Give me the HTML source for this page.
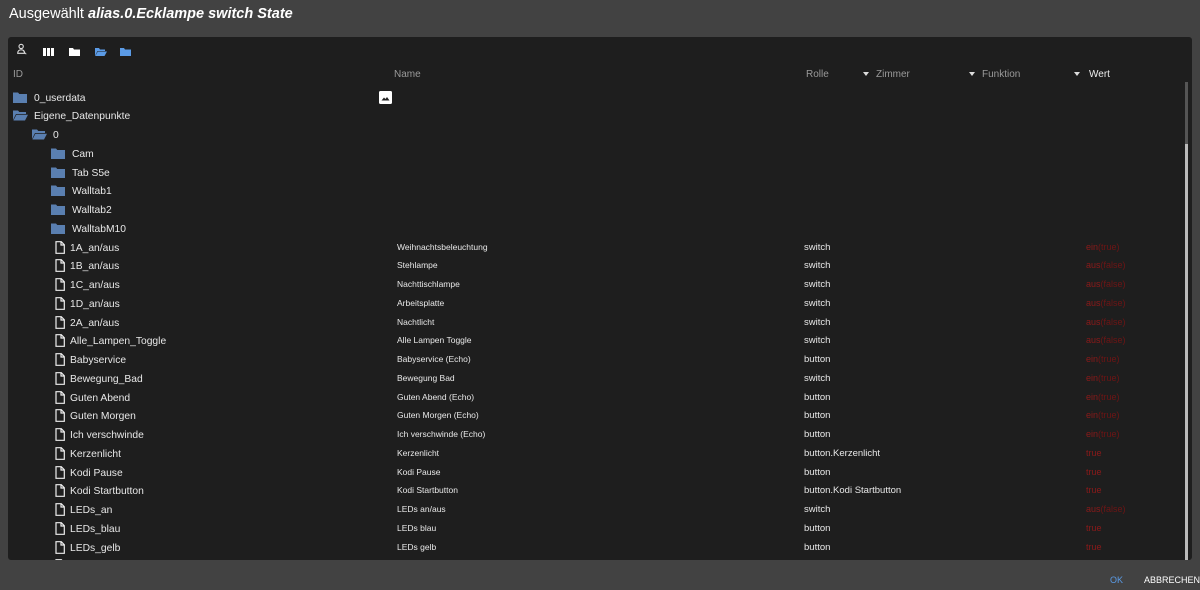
<!DOCTYPE html>
<html><head><meta charset="utf-8"><style>
*{margin:0;padding:0;box-sizing:border-box}
body{width:1200px;height:590px;background:#424242;font-family:"Liberation Sans",sans-serif;color:#fff;position:relative;overflow:hidden}
.title{position:absolute;left:9px;top:6px;font-size:14.5px;color:#fff}
.panel{position:absolute;left:8px;top:37px;width:1184px;height:523px;background:#1e1e1e;border-radius:3px;overflow:hidden}
.tb{position:absolute;top:9px;height:12px}
.hdr{position:absolute;top:32px;font-size:10px;color:#9a9a9a}
.arr{position:absolute;top:35px;width:0;height:0;border-left:3.5px solid transparent;border-right:3.5px solid transparent;border-top:4px solid #ddd}
.row{position:absolute;left:0;width:1170px;height:18.75px;font-size:10px;line-height:18.75px;color:#e8e8e8}
.row svg{position:absolute;top:4px}
.row .id{position:absolute;top:2px;font-size:10.3px}
.nm{position:absolute;left:389px;font-size:8.5px;top:0}
.ro{position:absolute;left:796px;font-size:9.5px;top:1px}
.va{position:absolute;left:1078px;font-size:9px;color:#8b1a1a;top:0}
.va b{font-weight:normal;color:#6e1515}
.sb{position:absolute;left:1177px;top:45px;width:3px;height:478px;background:#555}
.sb i{position:absolute;left:0;top:62px;width:3px;height:420px;background:#bbb;display:block}
.btn{position:absolute;top:575px;font-size:9px}
</style></head><body>
<div class="title">Ausgewählt <b><i>alias.0.Ecklampe switch State</i></b></div>
<div class="panel">
 <svg class="tb" style="left:8px;top:6px" width="12" height="14" viewBox="0 0 12 14"><circle cx="5" cy="4" r="2.5" fill="none" stroke="#ddd" stroke-width="1.3"/><path d="M1 12c0-3 2-4 4-4s4 1 4 4z" fill="none" stroke="#ddd" stroke-width="1.3"/><path d="M8 10l3 3" stroke="#ddd"/></svg>
 <svg class="tb" style="left:35px" width="11" height="10" viewBox="0 0 11 10"><rect x="0" y="1" width="3" height="8" fill="#fff"/><rect x="4" y="1" width="3" height="8" fill="#fff"/><rect x="8" y="1" width="3" height="8" fill="#fff"/></svg>
 <svg class="tb" style="left:61px" width="11" height="10" viewBox="0 0 11 10"><path d="M0 1h4l1 1.5h6V9H0z" fill="#fff"/></svg>
 <svg class="tb" style="left:87px" width="12" height="10" viewBox="0 0 12 10"><path d="M0 1h4l1 1.5h5V4H2.5L0 9z" fill="#5b9be6"/><path d="M2.8 4.5H12L9.5 9H0.3z" fill="#5b9be6"/></svg>
 <svg class="tb" style="left:112px" width="11" height="10" viewBox="0 0 11 10"><path d="M0 1h4l1 1.5h6V9H0z" fill="#5b9be6"/></svg>
 <div class="hdr" style="left:5px">ID</div>
 <div class="hdr" style="left:386px">Name</div>
 <div class="hdr" style="left:798px">Rolle</div><div class="arr" style="left:855px"></div>
 <div class="hdr" style="left:868px">Zimmer</div><div class="arr" style="left:961px"></div>
 <div class="hdr" style="left:974px">Funktion</div><div class="arr" style="left:1066px"></div>
 <div class="hdr" style="left:1081px;color:#eee">Wert</div>
 <div class="sb"><i></i></div>
 <div id="rows"></div>
</div>
<div class="btn" style="left:1110px;color:#5b9be6">OK</div>
<div class="btn" style="left:1144px;color:#fff">ABBRECHEN</div>
<script>
var F='<svg width="14" height="11" viewBox="0 0 14 11"><path d="M0 0.5h5l1.3 1.5H14v9H0z" fill="#5a7fb0"/></svg>';
var O='<svg width="15" height="11" viewBox="0 0 15 11"><path d="M0 0.5h5l1.3 1.5H13v2H3L0 10z" fill="#5a7fb0"/><path d="M3.4 4.8H15L12 10.5H0.4z" fill="#5a7fb0"/></svg>';
var D='<svg width="10" height="13" viewBox="0 0 10 13" style="top:3px"><path d="M1 .7h5.3L9.3 3.7V12.3H1z M6 .7V4h3.3" fill="none" stroke="#eee" stroke-width="1.2"/></svg>';
var rows=[
[0,'f','0_userdata'],[0,'o','Eigene_Datenpunkte'],[1,'o','0'],
[2,'f','Cam'],[2,'f','Tab S5e'],[2,'f','Walltab1'],[2,'f','Walltab2'],[2,'f','WalltabM10'],
[3,'d','1A_an/aus','Weihnachtsbeleuchtung','switch','ein','(true)'],
[3,'d','1B_an/aus','Stehlampe','switch','aus','(false)'],
[3,'d','1C_an/aus','Nachttischlampe','switch','aus','(false)'],
[3,'d','1D_an/aus','Arbeitsplatte','switch','aus','(false)'],
[3,'d','2A_an/aus','Nachtlicht','switch','aus','(false)'],
[3,'d','Alle_Lampen_Toggle','Alle Lampen Toggle','switch','aus','(false)'],
[3,'d','Babyservice','Babyservice (Echo)','button','ein','(true)'],
[3,'d','Bewegung_Bad','Bewegung Bad','switch','ein','(true)'],
[3,'d','Guten Abend','Guten Abend (Echo)','button','ein','(true)'],
[3,'d','Guten Morgen','Guten Morgen (Echo)','button','ein','(true)'],
[3,'d','Ich verschwinde','Ich verschwinde (Echo)','button','ein','(true)'],
[3,'d','Kerzenlicht','Kerzenlicht','button.Kerzenlicht','true',''],
[3,'d','Kodi Pause','Kodi Pause','button','true',''],
[3,'d','Kodi Startbutton','Kodi Startbutton','button.Kodi Startbutton','true',''],
[3,'d','LEDs_an','LEDs an/aus','switch','aus','(false)'],
[3,'d','LEDs_blau','LEDs blau','button','true',''],
[3,'d','LEDs_gelb','LEDs gelb','button','true',''],
[3,'d','','','','','']];
var ix=[5,24,43,47],tx=[26,45,64,62];
var h='';
rows.forEach(function(r,i){
 var top=50.6+18.75*i;
 var ic=r[1]=='f'?F:r[1]=='o'?O:D;
 h+='<div class="row" style="top:'+top+'px"><span style="position:absolute;left:'+ix[r[0]]+'px;top:0">'+ic+'</span><span class="id" style="left:'+tx[r[0]]+'px">'+r[2]+'</span>';
 if(i==0)h+='<svg style="position:absolute;left:371px;top:3px" width="13" height="13" viewBox="0 0 13 13"><rect width="13" height="13" rx="1.5" fill="#fff"/><path d="M2.5 9.5l2.5-3 1.5 1.5 1.5-2 2.5 3.5z" fill="#222"/></svg>';
 if(r[3]!==undefined&&r[2])h+='<span class="nm">'+r[3]+'</span><span class="ro">'+r[4]+'</span><span class="va">'+r[5]+'<b>'+r[6]+'</b></span>';
 h+='</div>';
});
document.getElementById('rows').innerHTML=h;
</script>
</body></html>
